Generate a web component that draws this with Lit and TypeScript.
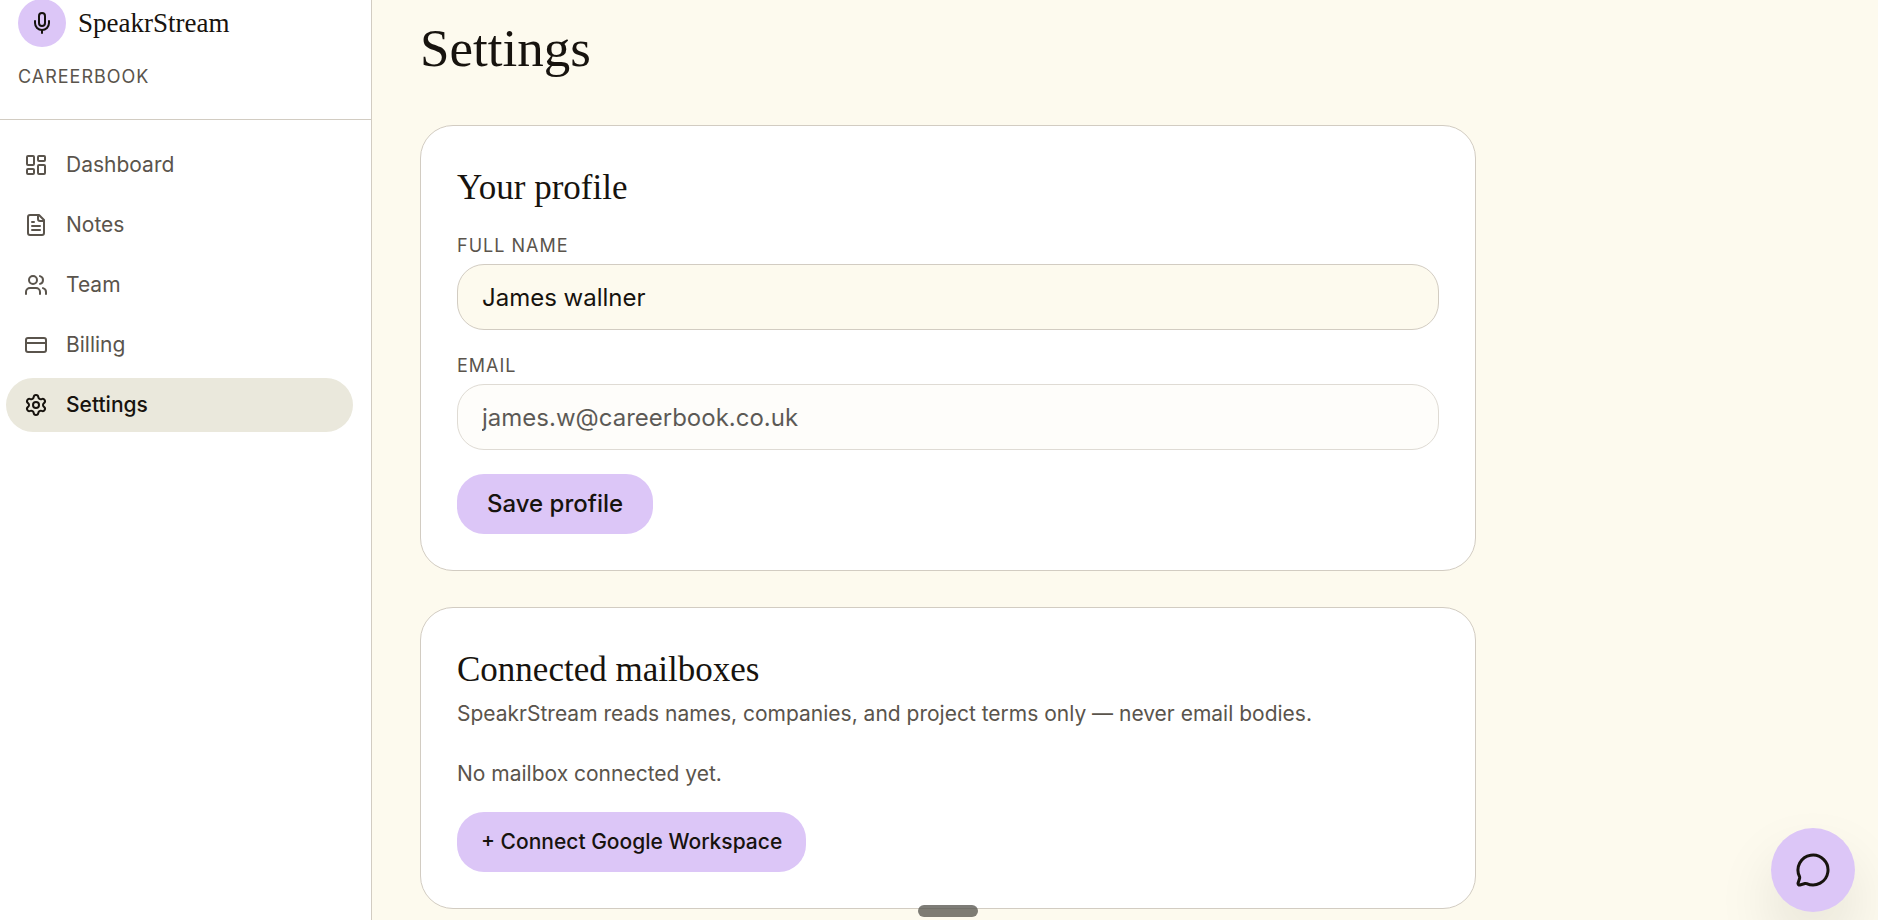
import { LitElement, html, css, svg } from "lit";
import { customElement, property, state } from "lit/decorators.js";
import { classMap } from "lit/directives/class-map.js";

const icons = {
  mic: svg`<path d="M12 19v3"/><path d="M19 10v2a7 7 0 0 1-14 0v-2"/><rect x="9" y="2" width="6" height="13" rx="3"/>`,
  dashboard: svg`<rect width="7" height="9" x="3" y="3" rx="1"/><rect width="7" height="5" x="14" y="3" rx="1"/><rect width="7" height="9" x="14" y="12" rx="1"/><rect width="7" height="5" x="3" y="16" rx="1"/>`,
  notes: svg`<path d="M15 2H6a2 2 0 0 0-2 2v16a2 2 0 0 0 2 2h12a2 2 0 0 0 2-2V7Z"/><path d="M14 2v4a2 2 0 0 0 2 2h4"/><path d="M10 9H8"/><path d="M16 13H8"/><path d="M16 17H8"/>`,
  team: svg`<path d="M16 21v-2a4 4 0 0 0-4-4H6a4 4 0 0 0-4 4v2"/><path d="M16 3.128a4 4 0 0 1 0 7.744"/><path d="M22 21v-2a4 4 0 0 0-3-3.87"/><circle cx="9" cy="7" r="4"/>`,
  billing: svg`<rect width="20" height="14" x="2" y="5" rx="2"/><path d="M2 10h20"/>`,
  settings: svg`<path d="M9.671 4.136a2.34 2.34 0 0 1 4.659 0 2.34 2.34 0 0 0 3.319 1.915 2.34 2.34 0 0 1 2.33 4.033 2.34 2.34 0 0 0 0 3.831 2.34 2.34 0 0 1-2.33 4.033 2.34 2.34 0 0 0-3.319 1.915 2.34 2.34 0 0 1-4.659 0 2.34 2.34 0 0 0-3.32-1.915 2.34 2.34 0 0 1-2.33-4.033 2.34 2.34 0 0 0 0-3.831A2.34 2.34 0 0 1 6.35 6.051a2.34 2.34 0 0 0 3.319-1.915"/><circle cx="12" cy="12" r="3"/>`,
  chat: svg`<path d="M2.992 16.342a2 2 0 0 1 .094 1.167l-1.065 3.29a1 1 0 0 0 1.236 1.168l3.413-.998a2 2 0 0 1 1.099.092 10 10 0 1 0-4.777-4.719"/>`,
};

type IconName = keyof typeof icons;

@customElement("line-icon")
export class LineIcon extends LitElement {
  static styles = css`
    :host {
      display: block;
      flex: none;
      width: 24px;
      height: 24px;
    }
    .glyph {
      display: block;
      width: 100%;
      height: 100%;
    }
  `;

  @property() name: IconName = "mic";

  render() {
    return html`<svg
      class="glyph"
      viewBox="0 0 24 24"
      fill="none"
      stroke="currentColor"
      stroke-width="2"
      stroke-linecap="round"
      stroke-linejoin="round"
      aria-hidden="true"
    >
      ${icons[this.name]}
    </svg>`;
  }
}

const navItems: { label: string; icon: IconName }[] = [
  { label: "Dashboard", icon: "dashboard" },
  { label: "Notes", icon: "notes" },
  { label: "Team", icon: "team" },
  { label: "Billing", icon: "billing" },
  { label: "Settings", icon: "settings" },
];

@customElement("side-bar")
export class SideBar extends LitElement {
  static styles = css`
    :host {
      display: block;
      background: #ffffff;
      border-right: 1px solid #d2ccc2;
    }
    .header {
      display: flex;
      flex-direction: column;
      gap: 18px;
      padding: 0 18px 30px;
      border-bottom: 1px solid #d2ccc2;
    }
    .brand {
      display: flex;
      align-items: center;
      gap: 12px;
      height: 46px;
      color: #17130e;
      text-decoration: none;
    }
    .badge {
      display: grid;
      place-items: center;
      flex: none;
      width: 48px;
      height: 48px;
      border-radius: 50%;
      background: #dcc6f7;
    }
    .name {
      font: 27px/36px "Liberation Serif", serif;
    }
    .workspace {
      font-size: 18px;
      line-height: 25px;
      letter-spacing: 1px;
      text-transform: uppercase;
    }
    .nav {
      display: flex;
      flex-direction: column;
      gap: 6px;
      padding: 18px 18px 18px 6px;
    }
    .item {
      display: flex;
      align-items: center;
      gap: 18px;
      padding: 12px 18px;
      border-radius: 27px;
      color: #5a544c;
      font-size: 21px;
      line-height: 30px;
      text-decoration: none;
    }
    .active {
      background: #eae8dc;
      color: #17130e;
      font-weight: 500;
    }
  `;

  @state() private current = "Settings";

  render() {
    return html`
      <div class="header">
        <a class="brand" href="#dashboard">
          <span class="badge"><line-icon name="mic"></line-icon></span>
          <span class="name">SpeakrStream</span>
        </a>
        <div class="workspace">Careerbook</div>
      </div>
      <nav class="nav" aria-label="Main">
        ${navItems.map(
          ({ label, icon }) => html`<a
            class=${classMap({ item: true, active: label === this.current })}
            href="#${label.toLowerCase()}"
            @click=${() => (this.current = label)}
            ><line-icon name=${icon}></line-icon>${label}</a
          >`
        )}
      </nav>
    `;
  }
}

@customElement("app-root")
export class AppRoot extends LitElement {
  static styles = css`
    :host {
      display: grid;
      grid-template-columns: 372px minmax(0, 1fr);
      min-height: 100vh;
      background: #fdfaee;
      color: #5a544c;
      font-family: Inter, sans-serif;
    }
    .main {
      display: flex;
      flex-direction: column;
      gap: 36px;
      max-width: 1056px;
      padding: 17px 48px 0;
    }
    .title,
    .heading {
      margin: 0;
      color: #17130e;
      font-family: "Liberation Serif", serif;
      font-weight: 400;
    }
    .title {
      padding-bottom: 10px;
      font-size: 53px;
      line-height: 62px;
    }
    .heading {
      font-size: 35px;
      line-height: 52px;
    }
    .card {
      display: flex;
      flex-direction: column;
      align-items: flex-start;
      padding: 36px;
      border: 1px solid #d2ccc2;
      border-radius: 33px;
      background: #ffffff;
    }
    .form {
      display: flex;
      flex-direction: column;
      align-items: flex-start;
      gap: 24px;
      width: 100%;
      padding-top: 20px;
    }
    .field {
      display: flex;
      flex-direction: column;
      gap: 6px;
      width: 100%;
    }
    .label {
      font-size: 18px;
      line-height: 24px;
      letter-spacing: 1px;
      text-transform: uppercase;
    }
    .input {
      box-sizing: border-box;
      width: 100%;
      height: 66px;
      padding: 0 24px;
      border: 1px solid #d2ccc2;
      border-radius: 27px;
      background: #fdfaee;
      color: #17130e;
      font: 24px/36px Inter, sans-serif;
    }
    .input:disabled {
      opacity: 0.7;
      background: #fefdf8;
      color: #17130e;
    }
    .button {
      height: 60px;
      padding: 0 30px;
      border: 0;
      border-radius: 27px;
      background: #dcc6f7;
      color: #17130e;
      font: 500 24px/36px Inter, sans-serif;
      cursor: pointer;
    }
    .compact {
      padding: 0 24px;
      font-size: 21px;
      line-height: 30px;
    }
    .copy {
      display: flex;
      flex-direction: column;
      gap: 24px;
      padding-bottom: 20px;
    }
    .text {
      margin: 0;
      font-size: 21px;
      line-height: 36px;
    }
    .chat {
      position: fixed;
      right: 23px;
      bottom: 8px;
      display: grid;
      place-items: center;
      width: 84px;
      height: 84px;
      padding: 0;
      border: 0;
      border-radius: 50%;
      background: #dcc6f7;
      color: #17130e;
      box-shadow: 0 30px 60px rgba(23, 19, 14, 0.1);
      cursor: pointer;
    }
    .chat-icon {
      width: 36px;
      height: 36px;
    }
    .handle {
      position: fixed;
      left: 50%;
      bottom: 3px;
      width: 60px;
      height: 12px;
      margin-left: -21px;
      border-radius: 6px;
      background: rgba(90, 88, 82, 0.78);
    }
  `;

  render() {
    return html`
      <side-bar></side-bar>
      <main class="main">
        <h1 class="title">Settings</h1>
        <section class="card">
          <h2 class="heading">Your profile</h2>
          <form class="form" @submit=${(e: Event) => e.preventDefault()}>
            <div class="field">
              <label class="label" for="name">Full name</label>
              <input class="input" id="name" type="text" value="James wallner" />
            </div>
            <div class="field">
              <label class="label" for="email">Email</label>
              <input class="input" id="email" type="email" value="james.w@careerbook.co.uk" disabled />
            </div>
            <button class="button" type="submit">Save profile</button>
          </form>
        </section>
        <section class="card">
          <h2 class="heading">Connected mailboxes</h2>
          <div class="copy">
            <p class="text">SpeakrStream reads names, companies, and project terms only — never email bodies.</p>
            <p class="text">No mailbox connected yet.</p>
          </div>
          <button class="button compact" type="button">+ Connect Google Workspace</button>
        </section>
      </main>
      <div class="handle"></div>
      <button class="chat" type="button" aria-label="Open chat">
        <line-icon class="chat-icon" name="chat"></line-icon>
      </button>
    `;
  }
}
